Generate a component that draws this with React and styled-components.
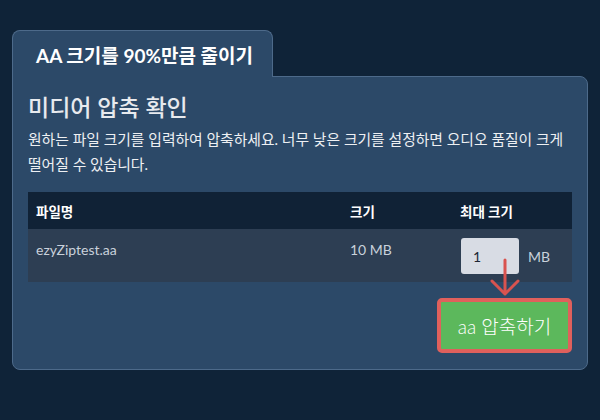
import React from "react";
import styled, { createGlobalStyle } from "styled-components";

const Global = createGlobalStyle`
  html, body { margin: 0; padding: 0; background: #0f2338; }
  body { font-family: Lato, "Noto Sans CJK KR", sans-serif; }
`;

const Page = styled.div`
  width: 600px;
  height: 420px;
  box-sizing: border-box;
  padding: 30px 12px 0 12px;
  background: #0f2338;
`;

const Tab = styled.div`
  display: inline-flex;
  align-items: center;
  height: 46px;
  padding: 0 19px 0 23px;
  background: #2c4968;
  border: 1px solid #4d6a8a;
  border-bottom: none;
  border-radius: 8px 8px 0 0;
  position: relative;
  z-index: 1;
  margin-bottom: -1px;
  color: #ffffff;
  font-size: 19px;
  font-weight: 700;
`;

const Panel = styled.div`
  height: 294px;
  box-sizing: border-box;
  background: #2c4968;
  border: 1px solid #4d6a8a;
  border-radius: 0 8px 8px 8px;
  padding: 14px 15px 0 15px;
  display: flex;
  flex-direction: column;
`;

const Heading = styled.h2`
  margin: 0;
  font-size: 23px;
  font-weight: 500;
  color: #e8eaee;
  line-height: 32px;
`;

const Desc = styled.p`
  margin: 4px 0 0 0;
  font-size: 14.8px;
  line-height: 25px;
  color: #eef0f3;
  word-break: keep-all;
`;

const Table = styled.div`
  margin-top: 15px;
  display: flex;
  flex-direction: column;
`;

const Row = styled.div`
  display: grid;
  grid-template-columns: 314px 110px 1fr;
  background: ${(p) => (p.$head ? "#102236" : "#2d3e53")};
  height: ${(p) => (p.$head ? "37px" : "53px")};
  padding-left: 8px;
  align-items: ${(p) => (p.$head ? "center" : "start")};
`;

const HeadCell = styled.div`
  color: #ffffff;
  font-size: 13.5px;
  font-weight: 700;
`;

const Cell = styled.div`
  color: #c9d1db;
  font-size: 14px;
  padding-top: 12px;
`;

const SizeCell = styled.div`
  display: flex;
  align-items: center;
  gap: 9px;
  padding-top: 9px;
  padding-left: 1px;
  color: #c9d1db;
  font-size: 14px;
`;

const Input = styled.div`
  width: 58px;
  height: 36px;
  box-sizing: border-box;
  background: #d8dce4;
  border-radius: 3px;
  padding-left: 12px;
  display: flex;
  align-items: center;
  color: #1d2633;
  font-size: 14px;
  position: relative;
`;

const Arrow = styled.svg`
  position: absolute;
  left: 30px;
  top: 22px;
  overflow: visible;
  z-index: 2;
`;

const Actions = styled.div`
  display: flex;
  justify-content: flex-end;
  margin-top: 16px;
`;

const Button = styled.button`
  width: 135px;
  height: 55px;
  box-sizing: border-box;
  background: #5cb85c;
  border: 4px solid #e0605c;
  border-radius: 5px;
  color: #ffffff;
  font-family: Lato, "Noto Sans CJK KR", sans-serif;
  font-size: 19px;
  font-weight: 300;
  padding: 0;
`;

export default function App() {
  return (
    <Page>
      <Global />
      <Tab>AA 크기를 90%만큼 줄이기</Tab>
      <Panel>
        <Heading>미디어 압축 확인</Heading>
        <Desc>
          원하는 파일 크기를 입력하여 압축하세요. 너무 낮은 크기를 설정하면 오디오 품질이 크게
          떨어질 수 있습니다.
        </Desc>
        <Table>
          <Row $head>
            <HeadCell>파일명</HeadCell>
            <HeadCell>크기</HeadCell>
            <HeadCell>최대 크기</HeadCell>
          </Row>
          <Row>
            <Cell>ezyZiptest.aa</Cell>
            <Cell>10 MB</Cell>
            <SizeCell>
              <Input>
                1
                <Arrow width="28" height="36" viewBox="0 0 28 36">
                  <path
                    d="M14 0 V34 M1 21 L14 34 L27 21"
                    stroke="#d9534f"
                    strokeWidth="3"
                    fill="none"
                    strokeLinecap="round"
                    strokeLinejoin="round"
                  />
                </Arrow>
              </Input>
              MB
            </SizeCell>
          </Row>
        </Table>
        <Actions>
          <Button>aa 압축하기</Button>
        </Actions>
      </Panel>
    </Page>
  );
}
